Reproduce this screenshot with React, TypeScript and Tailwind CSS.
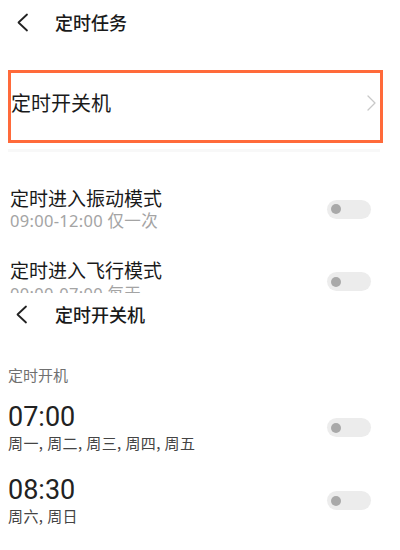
import React from "react";

const font = { fontFamily: '"Noto Sans CJK SC", "Noto Sans", sans-serif' };

function BackIcon() {
  return (
    <svg width="13" height="19" viewBox="0 0 13 19" fill="none">
      <path d="M11 1.5 L2.5 9.5 L11 17.5" stroke="#222" strokeWidth="1.8" strokeLinecap="round" strokeLinejoin="round" />
    </svg>
  );
}

function Toggle() {
  return (
    <div className="w-[44px] h-[19px] rounded-full bg-[#ececec] flex items-center pl-[4px]">
      <div className="w-[10px] h-[10px] rounded-full bg-[#a9a9a9]" />
    </div>
  );
}

export default function App() {
  return (
    <div className="w-[400px] h-[550px] bg-white overflow-hidden" style={font}>
      {/* Screen 1 */}
      <div className="h-[293px] overflow-hidden">
        <div className="h-[44px] flex items-center pl-[16px]">
          <BackIcon />
          <span className="ml-[26px] text-[18px] font-medium text-[#1a1a1a] leading-none">定时任务</span>
        </div>
        <div className="mt-[26px] ml-[8px] w-[375px] h-[73px] border-[3px] border-[#ff6a3a] flex items-center justify-between pb-[7px]">
          <span className="text-[20px] text-[#1a1a1a] leading-none">定时开关机</span>
          <svg width="9" height="16" viewBox="0 0 9 16" className="mr-[4px]">
            <path d="M1 1 L8 8 L1 15" stroke="#c8c8c8" strokeWidth="1.3" fill="none" strokeLinecap="round" strokeLinejoin="round" />
          </svg>
        </div>
        <div className="mt-[6px] ml-[8px] w-[372px] h-[3px] bg-[#f8f8f8]" />
        <div className="mt-[34px] flex items-center justify-between pl-[10px] pr-[29px]">
          <div className="flex flex-col">
            <span className="text-[19px] text-[#1a1a1a] leading-[24px]">定时进入振动模式</span>
            <span className="text-[16.5px] tracking-[0.3px] text-[#a4a4a4] leading-[22px]" style={{ fontFamily: '"Noto Sans", "Noto Sans CJK SC", sans-serif' }}>09:00-12:00 仅一次</span>
          </div>
          <Toggle />
        </div>
        <div className="mt-[26px] flex items-center justify-between pl-[10px] pr-[29px]">
          <div className="flex flex-col">
            <span className="text-[19px] text-[#1a1a1a] leading-[24px]">定时进入飞行模式</span>
            <span className="text-[16.5px] tracking-[0.3px] text-[#a4a4a4] leading-[22px] mt-[1px]" style={{ fontFamily: '"Noto Sans", "Noto Sans CJK SC", sans-serif' }}>00:00-07:00 每天</span>
          </div>
          <Toggle />
        </div>
      </div>
      {/* Screen 2 */}
      <div>
        <div className="h-[42px] flex items-center pl-[15px]">
          <BackIcon />
          <span className="ml-[27px] text-[18px] font-medium text-[#1a1a1a] leading-none">定时开关机</span>
        </div>
        <div className="mt-[30px] pl-[8px] text-[15px] text-[#707070] leading-[20px]">定时开机</div>
        <div className="mt-[17px] flex items-center justify-between pl-[8px] pr-[29px]">
          <div className="flex flex-col">
            <span className="text-[27px] text-[#222] leading-[30px]" style={{ fontFamily: 'Roboto, sans-serif' }}>07:00</span>
            <span className="text-[15px] tracking-[0.4px] text-[#444] leading-[20px] mt-[1px]">周一, 周二, 周三, 周四, 周五</span>
          </div>
          <Toggle />
        </div>
        <div className="mt-[22px] flex items-center justify-between pl-[8px] pr-[29px]">
          <div className="flex flex-col">
            <span className="text-[27px] text-[#222] leading-[30px]" style={{ fontFamily: 'Roboto, sans-serif' }}>08:30</span>
            <span className="text-[15px] tracking-[0.4px] text-[#444] leading-[20px] mt-[1px]">周六, 周日</span>
          </div>
          <Toggle />
        </div>
      </div>
    </div>
  );
}
